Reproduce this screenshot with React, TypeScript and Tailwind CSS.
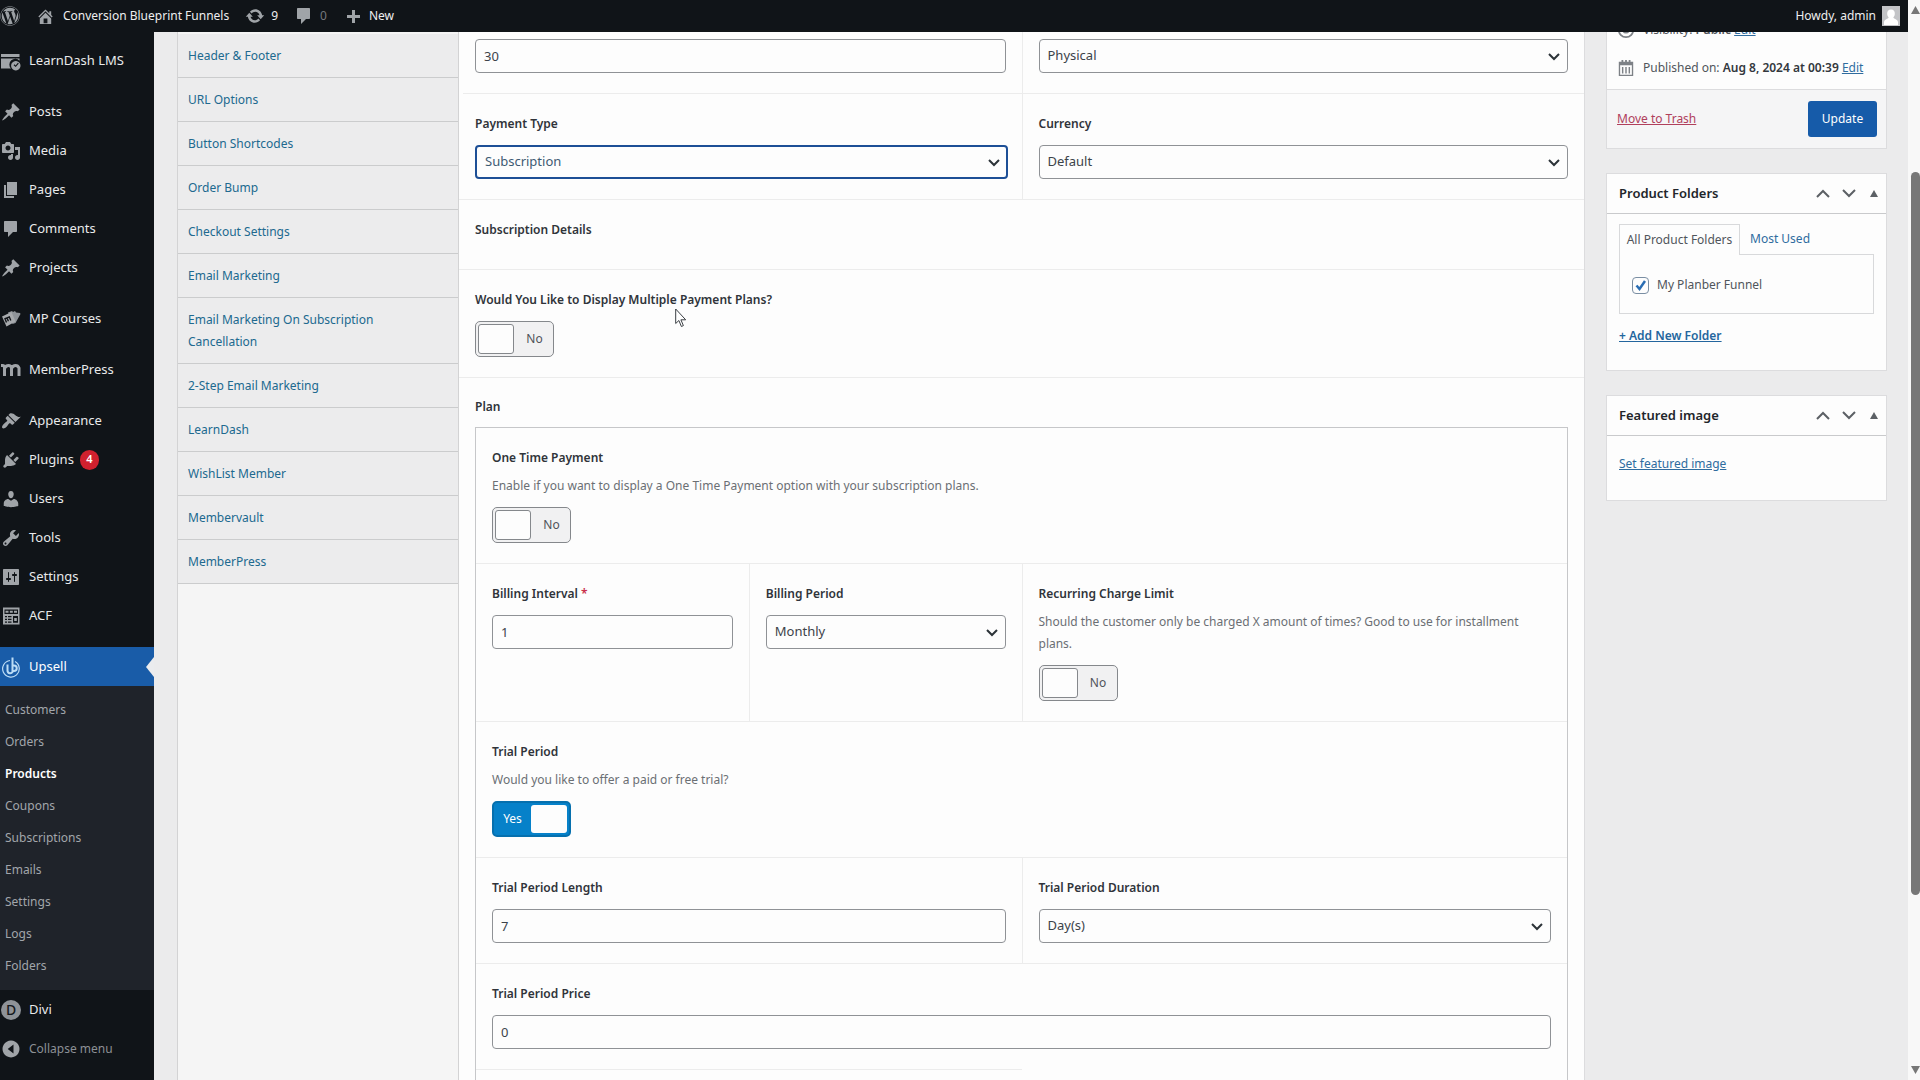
import { useId, type ReactNode } from "react";
import { FaWordpress } from "react-icons/fa";

const ICONS: Record<string, string> = {
  home: "M16 8.5l1.53 1.53-1.06 1.06L10 4.6l-6.47 6.49-1.06-1.06L10 2.5l4 4v-2h2v4zm-6-2.46l6 5.99V18H4v-5.97zM12 17v-5H8v5h4z",
  update:
    "M10.2 3.28c3.53 0 6.43 2.61 6.92 6h2.08l-3.5 4-3.5-4h2.32c-.45-1.97-2.21-3.45-4.32-3.45-1.45 0-2.73.71-3.54 1.78L4.95 5.66C6.23 4.2 8.11 3.28 10.2 3.28zm-.4 13.44c-3.52 0-6.43-2.61-6.92-6H.8l3.5-4c1.17 1.33 2.33 2.67 3.5 4H5.48c.45 1.97 2.21 3.45 4.32 3.45 1.45 0 2.73-.71 3.54-1.78l1.71 1.95c-1.28 1.46-3.15 2.38-5.25 2.38z",
  comment: "M4 2h11c.7 0 1 .4 1 1v9c0 .7-.4 1-1 1h-3l-5 5v-5H4c-.7 0-1-.4-1-1V3c0-.6.4-1 1-1z",
  plus: "M17 9v3h-5v5H9v-5H4V9h5V4h3v5h5z",
  pin: "M10.44 3.02l1.82-1.82 6.36 6.35-1.83 1.82c-1.05-.68-2.48-.57-3.41.36l-.75.75c-.92.93-1.04 2.35-.35 3.41l-1.83 1.82-2.41-2.41-2.8 2.79c-.42.42-3.38 2.71-3.8 2.29s1.86-3.39 2.28-3.81l2.79-2.79L4.1 9.36l1.83-1.82c1.05.69 2.48.57 3.4-.36l.75-.75c.93-.92 1.05-2.35.36-3.41z",
  media:
    "M13 11V4c0-.55-.45-1-1-1h-1.67L9 1H5L3.67 3H2c-.55 0-1 .45-1 1v7c0 .55.45 1 1 1h10c.55 0 1-.45 1-1zM7 4.5c1.38 0 2.5 1.12 2.5 2.5S8.38 9.5 7 9.5 4.5 8.38 4.5 7 5.62 4.5 7 4.5zM14 6h5v10.5c0 1.38-1.12 2.5-2.5 2.5S14 17.88 14 16.5s1.12-2.5 2.5-2.5c.17 0 .34.02.5.05V9h-3V6zm-4 8.05V13h2v3.5c0 1.38-1.12 2.5-2.5 2.5S7 17.88 7 16.5 8.12 14 9.5 14c.17 0 .34.02.5.05z",
  page: "M6 15V2h10v13H6zm-1 1h8v2H3V5h2v11z",
  appearance:
    "M14.48 11.06L7.41 3.99l1.5-1.5c.5-.56 2.3-.47 3.51.32 1.21.8 1.43 1.28 2.91 2.1 1.18.64 2.45 1.26 4.45.85zm-.71.71L6.7 4.7 4.93 6.47c-.39.39-.39 1.02 0 1.41l1.06 1.06c.39.39.39 1.03 0 1.42-.6.6-1.43 1.11-2.21 1.69-.35.26-.7.53-1.01.84C1.43 14.23.4 16.08 1.4 17.07c.99 1 2.84-.03 4.18-1.36.31-.31.58-.66.85-1.02.57-.78 1.08-1.61 1.69-2.21.39-.39 1.02-.39 1.41 0l1.06 1.06c.39.39 1.02.39 1.41 0z",
  plugins:
    "M13.11 4.36L9.87 7.6 8 5.73l3.24-3.24c.35-.34 1.05-.2 1.56.32.52.51.66 1.21.31 1.55zm-8 1.77l.91-1.12 9.01 9.01-1.19.84c-.71.71-2.63 1.16-3.82 1.16H6.14L4.9 17.26c-.59.59-1.54.59-2.12 0-.59-.58-.59-1.53 0-2.12l1.24-1.24v-3.88c0-1.13.4-3.19 1.09-3.89zm7.26 3.97l3.24-3.24c.34-.35 1.04-.21 1.55.31.52.51.66 1.21.31 1.55l-3.24 3.25z",
  users:
    "M10 9.25c-2.27 0-2.73-3.44-2.73-3.44C7 4.02 7.82 2 9.97 2c2.16 0 2.98 2.02 2.71 3.81 0 0-.41 3.44-2.68 3.44zm0 2.57L12.72 10c2.39 0 4.52 2.33 4.52 4.53v2.49s-3.65 1.13-7.24 1.13c-3.65 0-7.24-1.13-7.24-1.13v-2.49c0-2.25 1.94-4.48 4.47-4.48z",
  tools:
    "M16.68 9.77c-1.34 1.34-3.3 1.67-4.95.99l-5.41 6.52c-.99.99-2.59.99-3.58 0s-.99-2.59 0-3.57l6.52-5.42c-.68-1.65-.35-3.61.99-4.95 1.28-1.28 3.12-1.62 4.72-1.06l-2.89 2.89 2.82 2.82 2.86-2.87c.53 1.58.18 3.39-1.08 4.65zM3.81 16.21c.4.39 1.04.39 1.43 0 .4-.4.4-1.04 0-1.43-.39-.4-1.03-.4-1.43 0-.39.39-.39 1.03 0 1.43z",
  settings:
    "M18 17V3c0-.6-.4-1-1-1H3c-.6 0-1 .4-1 1v14c0 .6.4 1 1 1h14c.6 0 1-.4 1-1zM8 11h1c.55 0 1 .45 1 1s-.45 1-1 1H8v1.5c0 .28-.22.5-.5.5s-.5-.22-.5-.5V13H6c-.55 0-1-.45-1-1s.45-1 1-1h1V5.5c0-.28.22-.5.5-.5s.5.22.5.5V11zm5-2h-1c-.55 0-1-.45-1-1s.45-1 1-1h1V5.5c0-.28.22-.5.5-.5s.5.22.5.5V7h1c.55 0 1 .45 1 1s-.45 1-1 1h-1v5.5c0 .28-.22.5-.5.5s-.5-.22-.5-.5V9z",
  acf: "M2 1.500h16.500v17H2zM3.500 3.500v4.500h13.500v-4.500zM4.500 4.700h3v2h-3zM8.800 4.700h3v2h-3zM13 4.700h3v2h-3zM4 10v1.300h2V10zM7 10v1.300h3.500V10zM4 12.700v1.300h2v-1.300zM7 12.700v1.300h3.500v-1.300zM4 15.400v1.300h2v-1.300zM7 15.400v1.300h3.500v-1.300zM12 10v6.700h5V10zM13.200 12h2.600v3h-2.600z",
  learndash:
    "M1 3h17.500v3H0V3zM0 7.500h18.500v2.200a5.700 5.700 0 0 0-8.600 7.800H0zM14.800 10a4.700 4.700 0 1 0 .01 0zM12.600 14.200l.9-.9 1.100 1.100 2.300-2.600.9.800-3.100 3.500z",
  collapse: "M10 1.500a8.500 8.500 0 1 0 .01 0zM12.500 5.500v9L6.700 10z",
  calendar:
    "M5 1h2v2h2V1h2v2h2V1h2v2h3v16H2V3h3zM3.500 7v10.500h13V7zM5.500 9h1.600v7H5.500zM9.200 9h1.600v7H9.200zM12.900 9h1.600v7h-1.600z",
};

function Icon({ name, className = "size-5" }: { name: string; className?: string }) {
  return (
    <svg viewBox="0 0 20 20" className={`shrink-0 fill-current ${className}`} aria-hidden="true">
      <path fillRule="evenodd" d={ICONS[name]} />
    </svg>
  );
}

function UpsellIcon() {
  return (
    <svg viewBox="0 0 20 24" className="h-6 w-5 shrink-0 fill-none stroke-[#bcdcf5]" aria-hidden="true">
      <path strokeWidth="1.200" d="M9 5.500A8.300 8.300 0 1 0 14 6.500" />
      <path strokeWidth="2" d="M6.500 9.500v6a2.700 2.700 0 0 0 5 1.500V2.500M11.500 10.500h1.500a2.500 2.500 0 0 1 0 5.500h-1.500" />
    </svg>
  );
}

function CoursesIcon() {
  return (
    <svg viewBox="0 0 20 20" className="size-5 shrink-0" aria-hidden="true">
      <path fill="#8f9499" d="M7 3.500l4-1.500 1 1 2-1 1 1.500 4 .5.500 1-5 9-3 1z" />
      <path fill="#a7aaad" d="M1 7.500L10.500 3l4 9.500-9 5z" />
      <path stroke="#111418" strokeWidth="1.400" fill="none" d="M5.500 13.500L4 9.700l2-.8 1.400 3.400M6 8.900l2.300-.9 1.500 3.500" />
    </svg>
  );
}

type Entry = { label: string; icon: ReactNode; gap?: boolean; badge?: string };

const MENU: Entry[] = [
  { label: "LearnDash LMS", icon: <Icon name="learndash" /> },
  { label: "Posts", icon: <Icon name="pin" />, gap: true },
  { label: "Media", icon: <Icon name="media" /> },
  { label: "Pages", icon: <Icon name="page" /> },
  { label: "Comments", icon: <Icon name="comment" /> },
  { label: "Projects", icon: <Icon name="pin" /> },
  { label: "MP Courses", icon: <CoursesIcon />, gap: true },
  {
    label: "MemberPress",
    gap: true,
    icon: (
      <svg viewBox="0 0 20 20" className="size-5 shrink-0 fill-none stroke-current" aria-hidden="true">
        <path strokeWidth="3" d="M0 5.500h1.500q2 0 2 2V16M4 8q1-2.500 3.500-2.500T10.500 8v8M11 8q1-2.500 3.500-2.500T18 8v8" />
      </svg>
    ),
  },
  { label: "Appearance", icon: <Icon name="appearance" />, gap: true },
  { label: "Plugins", icon: <Icon name="plugins" />, badge: "4" },
  { label: "Users", icon: <Icon name="users" /> },
  { label: "Tools", icon: <Icon name="tools" /> },
  { label: "Settings", icon: <Icon name="settings" /> },
  { label: "ACF", icon: <Icon name="acf" /> },
];

const SUBMENU = ["Customers", "Orders", "Products", "Coupons", "Subscriptions", "Emails", "Settings", "Logs", "Folders"];

const TABS = [
  "Header & Footer",
  "URL Options",
  "Button Shortcodes",
  "Order Bump",
  "Checkout Settings",
  "Email Marketing",
  "Email Marketing On Subscription Cancellation",
  "2-Step Email Marketing",
  "LearnDash",
  "WishList Member",
  "Membervault",
  "MemberPress",
];

function MenuRow({ label, icon, gap, badge }: Entry) {
  return (
    <li className={gap ? "pt-3" : ""}>
      <a href="#" className="flex h-[39px] items-center gap-2 pl-px text-[#e9eaeb]">
        <span className="text-[#a0a4a8]">{icon}</span>
        {label}
        {badge && (
          <span className="-ml-0.5 flex h-5 w-[19px] items-center justify-center rounded-full bg-[#d0212e] text-[11px] font-semibold text-white">
            {badge}
          </span>
        )}
      </a>
    </li>
  );
}

function AdminMenu() {
  return (
    <nav aria-label="Main menu" className="w-[154px] shrink-0 overflow-hidden bg-[#101418] pt-[9px] text-[13px]">
      <ul>
        {MENU.map((m) => (
          <MenuRow key={m.label} {...m} />
        ))}
        <li className="pt-3">
          <a href="#" className="relative flex h-[39px] items-center gap-2 bg-[#195ca8] pl-px text-white">
            <UpsellIcon />
            Upsell
            <span className="absolute top-2.5 right-0 border-y-10 border-r-8 border-y-transparent border-r-[#ebecee]" />
          </a>
          <ul className="bg-[#1f232a] py-2 text-xs text-[#a2a6ab]">
            {SUBMENU.map((s) => (
              <li key={s}>
                <a
                  href="#"
                  className={
                    s === "Products" ? "flex h-8 items-center pl-[5px] font-semibold text-white" : "flex h-8 items-center pl-[5px]"
                  }
                >
                  {s}
                </a>
              </li>
            ))}
          </ul>
        </li>
        <MenuRow
          label="Divi"
          icon={
            <span className="flex size-5 items-center justify-center rounded-full bg-[#8f9398] text-sm font-medium text-[#15191d]">
              D
            </span>
          }
        />
      </ul>
      <button type="button" className="flex h-[39px] items-center gap-2 pl-px text-xs text-[#8c9095]">
        <Icon name="collapse" className="size-5 text-[#a0a4a8]" />
        Collapse menu
      </button>
    </nav>
  );
}

function AdminBar() {
  return (
    <header className="flex h-8 shrink-0 items-center bg-[#101418] text-xs text-[#eeeeef]">
      <a href="#" aria-label="About WordPress" className="w-9 text-[#9ba0a4]">
        <FaWordpress className="size-5" />
      </a>
      <a href="#" className="flex items-center gap-2">
        <Icon name="home" className="size-[19px] text-[#a0a4a8]" />
        Conversion Blueprint Funnels
      </a>
      <a href="#" className="ml-4 flex items-center gap-1.5">
        <Icon name="update" className="size-5 text-[#a0a4a8]" />9
      </a>
      <a href="#" className="ml-4 flex items-center gap-1.5 text-[#74787d]">
        <Icon name="comment" className="size-5 text-[#a0a4a8]" />0
      </a>
      <a href="#" className="ml-4 flex items-center gap-1.5">
        <Icon name="plus" className="size-5 text-[#a0a4a8]" />
        New
      </a>
      <a href="#" className="mr-2 ml-auto flex items-center gap-1.5">
        Howdy, admin
        <svg viewBox="0 0 18 20" className="h-5 w-[18px]" aria-hidden="true">
          <path fill="#c3c4c7" d="M0 0h18v20H0z" />
          <path
            fill="#fff"
            d="M9 3.500a4 4 0 0 1 3.800 4.200c0 1.600-.8 3-1.500 3.800.6 1.500 4.200 1.800 4.700 4.500V19H2v-3c.5-2.700 4.100-3 4.700-4.500-.7-.8-1.500-2.200-1.500-3.800A4 4 0 0 1 9 3.500z"
          />
        </svg>
      </a>
    </header>
  );
}

function Label({ id, children }: { id?: string; children: ReactNode }) {
  return (
    <label htmlFor={id} className="mb-2.5 block text-xs leading-[22px] font-semibold text-[#30343a]">
      {children}
    </label>
  );
}

/* One bordered form cell; cells sit side by side in a grid row. */
function Cell({ children, className = "pt-[19px]" }: { children?: ReactNode; className?: string }) {
  return <div className={`border-[#ececec] px-4 pb-5 ${className}`}>{children}</div>;
}

function TextInput({ id, name, value }: { id?: string; name?: string; value: string }) {
  return (
    <input
      id={id}
      aria-label={name}
      defaultValue={value}
      className="block h-[34px] w-full rounded-sm border border-[#8f9296] bg-[#fdfdfd] px-2 text-[13px] text-[#3c434a]"
    />
  );
}

function SelectInput({ id, name, value, focused }: { id?: string; name?: string; value: string; focused?: boolean }) {
  return (
    <div className="relative">
      <select
        id={id}
        aria-label={name}
        defaultValue={value}
        className={
          focused
            ? "block h-[34px] w-full appearance-none rounded-sm border-2 border-[#1d4f96] bg-[#fdfdfd] px-2 text-[13px] text-[#3d5a73]"
            : "block h-[34px] w-full appearance-none rounded-sm border border-[#8f9296] bg-[#fdfdfd] px-2 text-[13px] text-[#3c434a]"
        }
      >
        <option>{value}</option>
      </select>
      <svg
        viewBox="0 0 12 8"
        className="pointer-events-none absolute top-3.5 right-2 h-2 w-3 fill-none stroke-[#2c3338] stroke-2"
        aria-hidden="true"
      >
        <path d="M1 1l5 5 5-5" />
      </svg>
    </div>
  );
}

function TextField({ label, value, required }: { label: string; value: string; required?: boolean }) {
  const id = useId();
  return (
    <>
      <Label id={id}>
        {label}
        {required && <span className="text-[#c9304a]"> *</span>}
      </Label>
      <TextInput id={id} value={value} />
    </>
  );
}

function SelectField({ label, value, focused }: { label: string; value: string; focused?: boolean }) {
  const id = useId();
  return (
    <>
      <Label id={id}>{label}</Label>
      <SelectInput id={id} value={value} focused={focused} />
    </>
  );
}

function Toggle({ label, hint, on }: { label: string; hint?: string; on?: boolean }) {
  const id = useId();
  return (
    <>
      <Label id={id}>{label}</Label>
      {hint && <p className="-mt-1 mb-2.5 text-xs leading-[22px] text-[#6b6f74]">{hint}</p>}
      <label
        className={
          on
            ? "flex h-9 w-[79px] items-center rounded-[5px] border-2 border-[#0670ae] bg-[#0681c9] p-0.5 text-xs text-white"
            : "flex h-9 w-[79px] items-center rounded-[5px] border border-[#85888c] bg-[#f1f1f2] p-0.5 text-xs text-[#50545a]"
        }
      >
        <input id={id} type="checkbox" role="switch" defaultChecked={on} className="sr-only" />
        {on && <span className="flex-1 pr-0.5 text-center">Yes</span>}
        <span
          className={
            on ? "h-full w-9 rounded-[3px] bg-[#fdfdfd]" : "h-full w-9 rounded-[3px] border border-[#85888c] bg-[#fdfdfd]"
          }
        />
        {!on && <span className="flex-1 pl-1 text-center">No</span>}
      </label>
    </>
  );
}

function ProductForm() {
  return (
    <form className="relative min-w-0 flex-1 bg-[#fdfdfd]">
      <div className="grid grid-cols-2">
        <Cell className="pt-[7px]">
          <TextInput name="Price" value="30" />
        </Cell>
        <Cell className="border-l pt-[7px]">
          <SelectInput name="Product type" value="Physical" />
        </Cell>
      </div>
      <div className="ml-1 grid grid-cols-2 border-t border-[#ececec]">
        <Cell className="-ml-1 pt-[19px]">
          <SelectField label="Payment Type" value="Subscription" focused />
        </Cell>
        <Cell className="-ml-0.5 border-l pt-[19px]">
          <SelectField label="Currency" value="Default" />
        </Cell>
      </div>
      <Cell className="border-t pt-[19px]">
        <h3 className="mb-2 text-xs leading-[22px] font-semibold text-[#30343a]">Subscription Details</h3>
      </Cell>
      <Cell className="border-t pt-[19px]">
        <Toggle label="Would You Like to Display Multiple Payment Plans?" />
      </Cell>
      <Cell className="border-t pt-[18px]">
        <h3 className="mb-[9px] text-xs leading-[22px] font-semibold text-[#30343a]">Plan</h3>
        <div className="border border-[#c6c7c9]">
          <Cell className="pt-[19px]">
            <Toggle
              label="One Time Payment"
              hint="Enable if you want to display a One Time Payment option with your subscription plans."
            />
          </Cell>
          <div className="grid grid-cols-4 border-t border-[#ececec]">
            <Cell className="pt-[19px]">
              <TextField label="Billing Interval" value="1" required />
            </Cell>
            <Cell className="border-l pt-[19px]">
              <SelectField label="Billing Period" value="Monthly" />
            </Cell>
            <Cell className="col-span-2 border-l pt-[19px]">
              <Toggle
                label="Recurring Charge Limit"
                hint="Should the customer only be charged X amount of times? Good to use for installment plans."
              />
            </Cell>
          </div>
          <Cell className="border-t pt-[19px]">
            <Toggle label="Trial Period" hint="Would you like to offer a paid or free trial?" on />
          </Cell>
          <div className="grid grid-cols-2">
            <Cell className="border-t pt-[19px]">
              <TextField label="Trial Period Length" value="7" />
            </Cell>
            <Cell className="border-t border-l pt-[19px]">
              <SelectField label="Trial Period Duration" value="Day(s)" />
            </Cell>
          </div>
          <Cell className="border-t pt-[19px]">
            <TextField label="Trial Period Price" value="0" />
          </Cell>
          <div className="grid grid-cols-2">
            <Cell className="border-t" />
          </div>
        </div>
      </Cell>
      <svg viewBox="0 0 12 20" className="absolute top-[275px] left-[216px] h-[22px] w-3" aria-hidden="true">
        <path fill="#fff" stroke="#3b3f44" strokeWidth="1" d="M.7 1v14.500l3.200-3 2.500 6 2-.9-2.500-5.800h4.800z" />
      </svg>
    </form>
  );
}

function BoxHeader({ title }: { title: string }) {
  return (
    <div className="flex h-10 items-center border-b border-[#c9cacc] pl-3 text-[#5c6065]">
      <h2 className="flex-1 text-[13px] font-semibold text-[#22262b]">{title}</h2>
      <button type="button" aria-label={`Move ${title} up`} className="flex w-[26px] justify-center">
        <svg viewBox="0 0 14 9" className="h-[9px] w-3.5 fill-none stroke-current stroke-2" aria-hidden="true">
          <path d="M1 8l6-6 6 6" />
        </svg>
      </button>
      <button type="button" aria-label={`Move ${title} down`} className="flex w-[26px] justify-center">
        <svg viewBox="0 0 14 9" className="h-[9px] w-3.5 fill-none stroke-current stroke-2" aria-hidden="true">
          <path d="M1 1l6 6 6-6" />
        </svg>
      </button>
      <button type="button" aria-label={`Toggle ${title}`} className="flex w-6 justify-center">
        <svg viewBox="0 0 8 7" className="h-[7px] w-2 fill-current" aria-hidden="true">
          <path d="M4 0l4 7H0z" />
        </svg>
      </button>
    </div>
  );
}

function SideColumn() {
  return (
    <aside className="w-[281px] shrink-0 text-xs text-[#50555b]">
      <section aria-label="Publish" className="-mt-3.5 border border-[#dcdcde] bg-[#fdfdfd]">
        <div className="flex h-[22px] items-center gap-2 pl-2.5">
          <svg viewBox="0 0 20 20" className="size-[18px] fill-none stroke-[#7d8186] stroke-2" aria-hidden="true">
            <circle cx="10" cy="10" r="8" />
            <circle cx="10" cy="10" r="3" />
          </svg>
          <span>
            Visibility: <b className="font-semibold">Public</b>{" "}
            <a href="#" className="text-[#2f6c9f] underline">
              Edit
            </a>
          </span>
        </div>
        <div className="mt-2.5 flex h-[38px] items-center gap-2 pb-1 pl-2.5 whitespace-nowrap">
          <Icon name="calendar" className="size-[18px] text-[#7d8186]" />
          <span>
            Published on: <b className="font-semibold text-[#33383d]">Aug 8, 2024 at 00:39</b>{" "}
            <a href="#" className="text-[#2f6c9f] underline">
              Edit
            </a>
          </span>
        </div>
        <div className="flex items-center justify-between border-t border-[#dcdcde] bg-[#f5f5f6] py-[11px] pr-[9px] pl-2.5">
          <a href="#" className="text-[#b0405c] underline">
            Move to Trash
          </a>
          <button type="button" className="h-9 w-[69px] rounded-[3px] bg-[#165ba9] text-xs text-white">
            Update
          </button>
        </div>
      </section>

      <section className="mt-6 border border-[#dcdcde] bg-[#fdfdfd]">
        <BoxHeader title="Product Folders" />
        <div className="px-3 pt-2.5 pb-6">
          <div className="flex h-[30px]" role="tablist">
            <button
              type="button"
              role="tab"
              aria-selected="true"
              className="relative -mb-px w-[121px] border border-b-0 border-[#d8d9db] bg-[#fdfdfd] whitespace-nowrap"
            >
              All Product Folders
            </button>
            <button type="button" role="tab" aria-selected="false" className="pl-2.5 text-[#2f6c9f]">
              Most Used
            </button>
          </div>
          <div className="border border-[#d8d9db] px-3 pt-5 pb-[18px]">
            <label className="flex h-5 items-center gap-2">
              <span className="relative flex size-[17px]">
                <input
                  type="checkbox"
                  defaultChecked
                  className="size-full appearance-none rounded-sm border border-[#7a8ea3] bg-[#fdfdfd]"
                />
                <svg
                  viewBox="0 0 17 17"
                  className="pointer-events-none absolute inset-0 fill-none stroke-[#2a6db3] stroke-[2.500]"
                  aria-hidden="true"
                >
                  <path d="M4.500 8.500l3 3.500 5.500-8" />
                </svg>
              </span>
              My Planber Funnel
            </label>
          </div>
          <a href="#" className="mt-3 inline-block leading-5 font-semibold text-[#24669e] underline">
            + Add New Folder
          </a>
        </div>
      </section>

      <section className="mt-6 border border-[#dcdcde] bg-[#fdfdfd]">
        <BoxHeader title="Featured image" />
        <div className="px-3 pt-[18px] pb-[26px]">
          <a href="#" className="inline-block leading-5 text-[#2f6c9f] underline">
            Set featured image
          </a>
        </div>
      </section>
    </aside>
  );
}

function ScrollTrack() {
  return (
    <div className="flex w-3 shrink-0 flex-col items-end overflow-hidden bg-[#f8f8f8] py-1.5" aria-hidden="true">
      <svg viewBox="0 0 9 8" className="h-2 w-[9px] fill-[#777]">
        <path d="M4.500 0L9 8H0z" />
      </svg>
      <div className="flex w-[9px] flex-1 flex-col py-1">
        <div className="grow-[154]" />
        <div className="grow-[721] rounded-full bg-[#777]" />
        <div className="grow-[167]" />
      </div>
      <svg viewBox="0 0 9 8" className="h-2 w-[9px] fill-[#777]">
        <path d="M0 0h9L4.500 8z" />
      </svg>
    </div>
  );
}

export default function App() {
  return (
    <div className="flex h-screen overflow-hidden font-['Noto_Sans',sans-serif]">
      <div className="flex min-w-0 flex-1 flex-col bg-[#ebebec]">
        <AdminBar />
        <div className="flex min-h-0 flex-1 overflow-hidden">
          <AdminMenu />
          <main className="flex min-w-0 flex-1 gap-[21px] overflow-hidden pr-[21px] pl-[23px]">
            <div className="flex min-w-0 flex-1 border-r border-[#dcdcde]">
              <ul className="w-[282px] shrink-0 border-x border-[#d3d3d4] bg-[#f5f5f5] pt-0.5 text-xs leading-[22px]">
                {TABS.map((t) => (
                  <li key={t}>
                    <a href="#" className="block border-b border-[#cbcccd] bg-[#ececed] pt-[11px] pr-14 pb-2.5 pl-2.5 text-[#20698f]">
                      {t}
                    </a>
                  </li>
                ))}
              </ul>
              <ProductForm />
            </div>
            <SideColumn />
          </main>
        </div>
      </div>
      <ScrollTrack />
    </div>
  );
}
